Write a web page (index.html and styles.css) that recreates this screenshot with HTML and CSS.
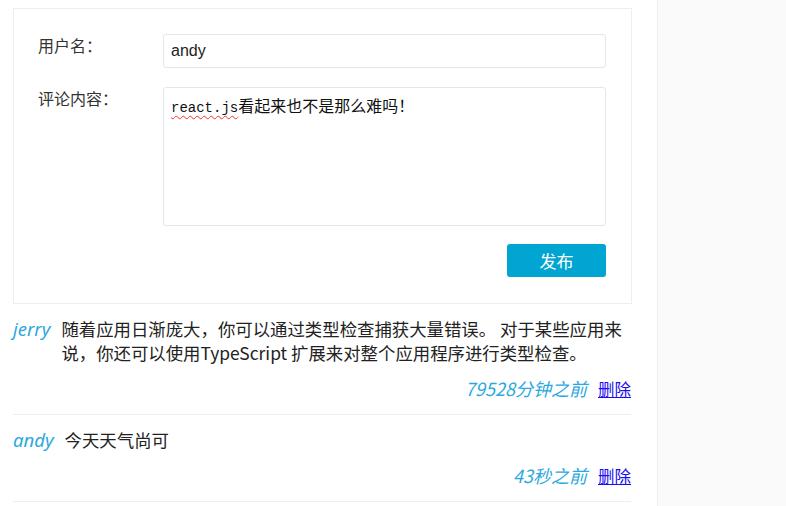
FILE: index.html
```html
<!DOCTYPE html>
<html lang="zh-CN">
<head>
<meta charset="utf-8">
<title>评论</title>
<link rel="stylesheet" href="styles.css">
</head>
<body>
<main class="app">
  <form class="comment-form">
    <div class="field">
      <label class="field-label">用户名：</label>
      <input class="field-input" type="text" value="andy">
    </div>
    <div class="field">
      <label class="field-label">评论内容：</label>
      <div class="field-textarea" role="textbox"><span class="misspelled">react.js</span>看起来也不是那么难吗！</div>
    </div>
    <div class="actions">
      <button type="button" class="btn-submit">发布</button>
    </div>
  </form>
  <ul class="comment-list">
    <li class="comment">
      <div class="comment-body">
        <span class="comment-user">jerry</span>
        <p class="comment-content">随着应用日渐庞大，你可以通过类型检查捕获大量错误。 对于某些应用来说，你还可以使用TypeScript 扩展来对整个应用程序进行类型检查。</p>
      </div>
      <div class="comment-meta">
        <span class="comment-time">79528分钟之前</span>
        <a href="#" class="comment-delete">删除</a>
      </div>
    </li>
    <li class="comment">
      <div class="comment-body">
        <span class="comment-user">andy</span>
        <p class="comment-content">今天天气尚可</p>
      </div>
      <div class="comment-meta">
        <span class="comment-time">43秒之前</span>
        <a href="#" class="comment-delete">删除</a>
      </div>
    </li>
  </ul>
</main>
<aside class="sidebar"></aside>
</body>
</html>
```

FILE: styles.css
```css
* { box-sizing: border-box; }

html, body { height: 100%; }

body {
  margin: 0;
  display: flex;
  background: #fff;
  color: #333;
  font-family: "Noto Sans CJK SC", "Noto Sans", sans-serif;
}

.app {
  width: 657px;
  padding: 8px 0 0 13px;
}

.comment-form {
  width: 619px;
  border: 1px solid #eee;
  padding: 25px 25px 26px 24px;
}

.field {
  display: grid;
  grid-template-columns: 125px 1fr;
  margin-bottom: 19px;
}

.field-label {
  font-size: 16px;
  line-height: 23px;
  color: #333;
}

.field-input {
  height: 34px;
  width: 100%;
  border: 1px solid #e6e6e6;
  border-radius: 3px;
  padding: 0 7px;
  font-family: "Liberation Sans", Arial, sans-serif;
  font-size: 16px;
  color: #222;
  outline: none;
}

.field-textarea {
  height: 139px;
  border: 1px solid #e6e6e6;
  border-radius: 3px;
  padding: 5px 7px;
  font-size: 16px;
  line-height: 24px;
  color: #111;
}

.misspelled {
  font-family: "Liberation Mono", monospace;
  font-size: 14px;
  text-decoration: underline wavy #e33;
  text-decoration-thickness: 1px;
  text-underline-offset: 3px;
}

.actions {
  display: flex;
  justify-content: flex-end;
  margin-top: -1px;
}

.btn-submit {
  width: 99px;
  height: 33px;
  border: none;
  border-radius: 3px;
  background: #00a5d1;
  color: #fff;
  font-family: "Noto Sans CJK SC", sans-serif;
  font-size: 17px;
  cursor: pointer;
}

.comment-list {
  list-style: none;
  margin: 0;
  padding: 0;
  width: 618px;
}

.comment {
  padding: 13px 0 13px;
  border-bottom: 1px solid #eee;
  font-size: 17.4px;
  line-height: 24px;
}

.comment-body {
  display: flex;
  align-items: flex-start;
}

.comment-user {
  font-family: "Noto Sans", sans-serif;
  font-style: italic;
  font-size: 18.5px;
  color: #2ca8de;
  margin-right: 11px;
  flex-shrink: 0;
}

.comment-content {
  margin: 0;
  color: #222;
}

.comment-meta {
  display: flex;
  justify-content: flex-end;
  align-items: baseline;
  gap: 11px;
  margin-top: 11px;
}

.comment-time {
  font-style: italic;
  color: #2ca8de;
  font-size: 18px;
}

.comment-delete {
  color: #1a0dee;
  font-size: 16.5px;
  text-decoration: underline;
}

.sidebar {
  flex: 1;
  background: #fafafa;
  border-left: 1px solid #f0f0f0;
}
```
